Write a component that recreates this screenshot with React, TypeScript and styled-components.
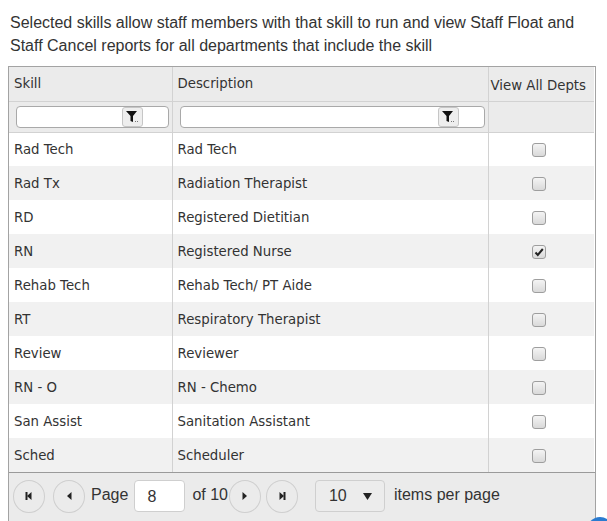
import React from 'react'
import styled, { createGlobalStyle } from 'styled-components'

const GlobalStyle = createGlobalStyle`
  html, body {
    margin: 0;
    padding: 0;
    background: #fff;
    overflow: hidden;
  }
`

const Page = styled.div`
  position: relative;
  width: 607px;
  height: 521px;
  overflow: hidden;
  padding: 11px 0 0 8px;
  box-sizing: border-box;
`

const Intro = styled.p`
  margin: 0 0 9px 2px;
  font-family: 'Liberation Sans', Arial, sans-serif;
  font-size: 16px;
  line-height: 23px;
  color: #333;
  width: 590px;
`

const Grid = styled.div`
  width: 586px;
  border: 1px solid #a3a3a3;
  border-bottom: none;
  font-family: 'DejaVu Sans', Verdana, sans-serif;
  font-size: 13.3px;
  color: #333;
`

const Table = styled.table`
  border-collapse: collapse;
  table-layout: fixed;
  width: 585px;
`

const HeadCell = styled.th<{ $last?: boolean }>`
  box-sizing: border-box;
  height: 34px;
  padding: ${({ $last }) => ($last ? '4px 0 0 2px' : '0 4px 0 5px')};
  text-align: left;
  font-weight: normal;
  background: #ebebeb;
  border-right: ${({ $last }) => ($last ? 'none' : '1px solid #d2d2d2')};
  border-bottom: 1px solid #d2d2d2;
  white-space: nowrap;
  overflow: hidden;
`

const FilterCell = styled.td<{ $last?: boolean }>`
  box-sizing: border-box;
  height: 31px;
  padding: 0 3px 0 7px;
  background: #ebebeb;
  border-right: ${({ $last }) => ($last ? 'none' : '1px solid #d2d2d2')};
  border-bottom: 1px solid #d2d2d2;
`

const FilterBox = styled.div`
  display: flex;
  height: 22px;
  border: 1px solid #a9a9a9;
  border-radius: 4px;
  background: #fff;
  box-sizing: border-box;
  overflow: hidden;
`

const FilterInput = styled.div`
  flex: 1;
`

const FilterButton = styled.div`
  width: 21px;
  height: 20px;
  border: 1px solid #c6c6c6;
  border-radius: 3px;
  background: #eee;
  box-sizing: border-box;
  display: flex;
  align-items: center;
  justify-content: center;
`

const FilterPad = styled.div`
  width: 25px;
`

const Row = styled.tr<{ $alt: boolean }>`
  background: ${({ $alt }) => ($alt ? '#f1f1f1' : '#fff')};
`

const Cell = styled.td<{ $last?: boolean; $center?: boolean }>`
  box-sizing: border-box;
  height: 34px;
  padding: ${({ $center }) => ($center ? '0 4px 0 0' : '0 4px 0 5px')};
  text-align: ${({ $center }) => ($center ? 'center' : 'left')};
  border-right: ${({ $last }) => ($last ? 'none' : '1px solid #d2d2d2')};
  white-space: nowrap;
`

const Check = styled.span`
  display: inline-flex;
  align-items: center;
  justify-content: center;
  width: 12px;
  height: 12px;
  border: 1px solid #9e9e9e;
  border-radius: 3px;
  background: linear-gradient(#f4f4f4, #d9d9d9);
  vertical-align: middle;
`

const Pager = styled.div`
  display: flex;
  align-items: center;
  height: 42px;
  padding: 2px 0 4px 4px;
  background: #ebebeb;
  border-top: 1px solid #9a9a9a;
  font-family: 'Liberation Sans', Arial, sans-serif;
  font-size: 16px;
  color: #333;
`

const NavButton = styled.div<{ $gapRight?: number }>`
  width: 32px;
  height: 33px;
  border: 1px solid #cfcfcf;
  border-radius: 50%;
  margin-right: ${({ $gapRight }) => $gapRight ?? 0}px;
  display: flex;
  align-items: center;
  justify-content: center;
  box-sizing: border-box;
`

const PagerText = styled.span<{ $ml: number; $mr: number }>`
  margin: -3px ${({ $mr }) => $mr}px 0 ${({ $ml }) => $ml}px;
`

const PageInput = styled.div`
  width: 51px;
  height: 32px;
  box-sizing: border-box;
  border: 1px solid #cfcfcf;
  border-radius: 4px;
  background: #fff;
  padding: 7px 0 0 12px;
`

const Dropdown = styled.div`
  width: 70px;
  height: 32px;
  box-sizing: border-box;
  margin-left: 17px;
  border: 1px solid #cfcfcf;
  border-radius: 4px;
  background: #ececec;
  display: flex;
  align-items: center;
  justify-content: space-between;
  padding: 0 12px 0 13px;
`

const HelpBubble = styled.div`
  position: absolute;
  right: -6px;
  bottom: -22px;
  width: 26px;
  height: 26px;
  border-radius: 50%;
  background: #2a7bd0;
`

const rows = [
  ['Rad Tech', 'Rad Tech', false],
  ['Rad Tx', 'Radiation Therapist', false],
  ['RD', 'Registered Dietitian', false],
  ['RN', 'Registered Nurse', true],
  ['Rehab Tech', 'Rehab Tech/ PT Aide', false],
  ['RT', 'Respiratory Therapist', false],
  ['Review', 'Reviewer', false],
  ['RN - O', 'RN - Chemo', false],
  ['San Assist', 'Sanitation Assistant', false],
  ['Sched', 'Scheduler', false],
] as const

const Funnel = () => (
  <svg width="15" height="15" viewBox="0 0 15 15">
    <path d="M1 2h11L8 7v6L5.5 12V7z" fill="#111" />
    <rect x="10" y="12" width="1" height="1" fill="#777" />
    <rect x="12" y="12" width="1" height="1" fill="#777" />
  </svg>
)

const Arrow = ({ dir, bar }: { dir: 'left' | 'right'; bar?: boolean }) => (
  <svg width="12" height="12" viewBox="0 0 12 12">
    {dir === 'left' ? (
      <>
        <path d="M8.5 2v8L4 6z" fill="#222" />
        {bar && <rect x="2.5" y="2" width="2" height="8" fill="#222" />}
      </>
    ) : (
      <>
        <path d="M3.5 2v8L8 6z" fill="#222" />
        {bar && <rect x="7.5" y="2" width="2" height="8" fill="#222" />}
      </>
    )}
  </svg>
)

const Tick = () => (
  <svg width="10" height="10" viewBox="0 0 10 10">
    <path d="M1.5 5.5l2.3 2.5L8.8 2" stroke="#222" strokeWidth="2" fill="none" />
  </svg>
)

function FilterField() {
  return (
    <FilterBox>
      <FilterInput />
      <FilterButton>
        <Funnel />
      </FilterButton>
      <FilterPad />
    </FilterBox>
  )
}

export default function App() {
  return (
    <Page>
      <GlobalStyle />
      <Intro>
        Selected skills allow staff members with that skill to run and view Staff Float and Staff Cancel reports for
        all departments that include the skill
      </Intro>
      <Grid>
        <Table>
          <colgroup>
            <col style={{ width: 163 }} />
            <col style={{ width: 316 }} />
            <col style={{ width: 106 }} />
          </colgroup>
          <thead>
            <tr>
              <HeadCell>Skill</HeadCell>
              <HeadCell>Description</HeadCell>
              <HeadCell $last>View All Depts</HeadCell>
            </tr>
            <tr>
              <FilterCell>
                <FilterField />
              </FilterCell>
              <FilterCell>
                <FilterField />
              </FilterCell>
              <FilterCell $last />
            </tr>
          </thead>
          <tbody>
            {rows.map(([skill, desc, checked], i) => (
              <Row key={skill} $alt={i % 2 === 1}>
                <Cell>{skill}</Cell>
                <Cell>{desc}</Cell>
                <Cell $last $center>
                  <Check>{checked && <Tick />}</Check>
                </Cell>
              </Row>
            ))}
          </tbody>
        </Table>
        <Pager>
          <NavButton $gapRight={8}>
            <Arrow dir="left" bar />
          </NavButton>
          <NavButton>
            <Arrow dir="left" />
          </NavButton>
          <PagerText $ml={6} $mr={6}>Page</PagerText>
          <PageInput>8</PageInput>
          <PagerText $ml={7} $mr={1}>of 10</PagerText>
          <NavButton $gapRight={5}>
            <Arrow dir="right" />
          </NavButton>
          <NavButton>
            <Arrow dir="right" bar />
          </NavButton>
          <Dropdown>
            <span>10</span>
            <svg width="9" height="7" viewBox="0 0 9 7">
              <path d="M0 0h9L4.5 7z" fill="#222" />
            </svg>
          </Dropdown>
          <PagerText $ml={9} $mr={0}>items per page</PagerText>
        </Pager>
      </Grid>
      <HelpBubble />
    </Page>
  )
}
